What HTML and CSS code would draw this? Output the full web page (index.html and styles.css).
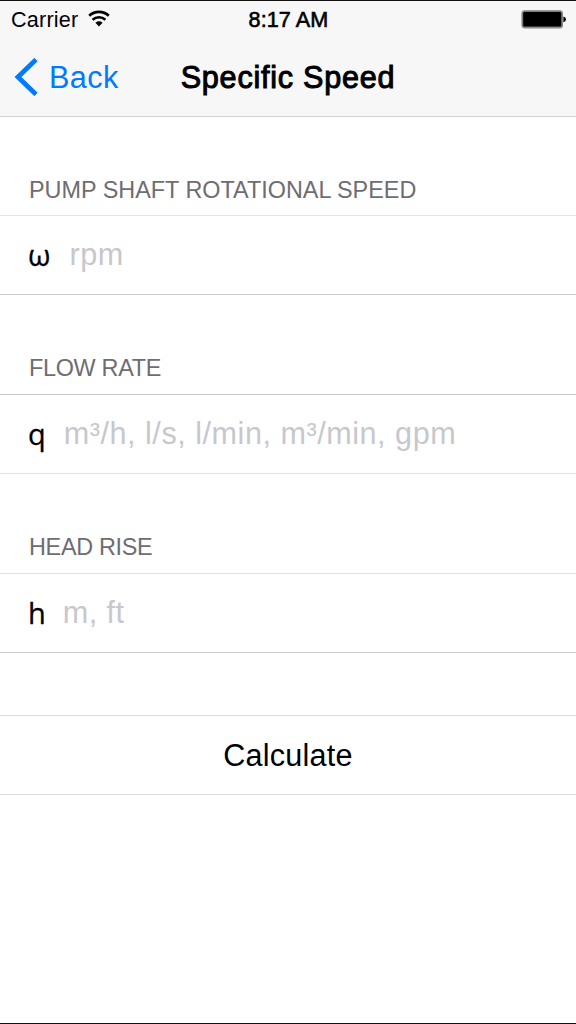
FILE: index.html
```html
<!DOCTYPE html>
<html lang="en">
<head>
    <meta charset="UTF-8">
    <meta name="viewport" content="width=device-width, initial-scale=1.0">
    <title>Specific Speed</title>
    <link rel="stylesheet" href="styles.css">
</head>
<body>
    <div class="screen">
        <header class="top-bar">
            <div class="status-bar">
                <div class="carrier">
                    <span class="carrier-name">Carrier</span>
                    <svg class="wifi" width="22" height="17" viewBox="0 0 22 17">
                        <path d="M1.2 5.7 A14.4 14.4 0 0 1 20.8 5.7" fill="none" stroke="#000" stroke-width="2.6"/>
                        <path d="M4.6 9.7 A9.6 9.6 0 0 1 17.4 9.7" fill="none" stroke="#000" stroke-width="2.6"/>
                        <path d="M7.4 12.8 Q11 9.9 14.6 12.8 L11 16.6 Z" fill="#000"/>
                    </svg>
                </div>
                <span class="time">8:17 AM</span>
                <svg class="battery" width="45" height="19" viewBox="0 0 45 19">
                    <rect x="1" y="0.8" width="40.4" height="17" rx="2.6" fill="#777" stroke="#888" stroke-width="1.2"/>
                    <rect x="2.2" y="2" width="38" height="14.6" rx="1.4" fill="#000"/>
                    <path d="M42.4 6.4 Q45 7 45 9.3 Q45 11.6 42.4 12.2 Z" fill="#000"/>
                </svg>
            </div>
            <nav class="nav-bar">
                <a class="back">
                    <svg class="chevron" width="24" height="38" viewBox="0 0 24 38">
                        <path d="M22 1.6 L4 19 L22 36.4" fill="none" stroke="#007aff" stroke-width="4.8"/>
                    </svg>
                    <span class="back-text">Back</span>
                </a>
                <h1 class="title">Specific Speed</h1>
            </nav>
        </header>

        <main>
            <section class="group">
                <h2 class="group-title">PUMP SHAFT ROTATIONAL SPEED</h2>
                <div class="row speed-row">
                    <span class="symbol">ω</span>
                    <span class="hint speed-hint">rpm</span>
                </div>
            </section>

            <section class="group">
                <h2 class="group-title flow-title">FLOW RATE</h2>
                <div class="row flow-row">
                    <span class="symbol">q</span>
                    <span class="hint flow-hint">m³/h, l/s, l/min, m³/min, gpm</span>
                </div>
            </section>

            <section class="group">
                <h2 class="group-title head-title">HEAD RISE</h2>
                <div class="row head-row">
                    <span class="symbol">h</span>
                    <span class="hint head-hint">m, ft</span>
                </div>
            </section>

            <div class="row calculate">
                <span>Calculate</span>
            </div>
        </main>
    </div>
</body>
</html>
```

FILE: styles.css
```css
body {
    margin: 0;
    background-color: #fff;
    color: #000;
    font-family: "Liberation Sans", Arial, sans-serif;
    font-size: 30.6px;
}

.screen {
    box-sizing: border-box;
    height: 1024px;
    border-top: 1px solid #111;
    border-bottom: 1px solid #111;
    overflow: hidden;
}

/* Status and navigation bars */
.top-bar {
    box-sizing: border-box;
    height: 116px;
    background-color: #f7f7f7;
    border-bottom: 1px solid #d3d3d3;
}

.status-bar {
    display: grid;
    grid-template-columns: 1fr auto 1fr;
    align-items: center;
    height: 37px;
    padding: 0 10px 0 11px;
    font-size: 21.6px;
}

.carrier {
    display: flex;
    align-items: center;
    gap: 10px;
}

.carrier-name {
    letter-spacing: 0.2px;
}

.wifi {
    margin-top: -2px;
}

.time {
    letter-spacing: 0.1px;
    -webkit-text-stroke: 0.6px #000;
}

.battery {
    justify-self: end;
}

.nav-bar {
    display: grid;
    grid-template-columns: 1fr auto 1fr;
    align-items: center;
    height: 77px;
    padding: 0 14px;
}

.back {
    display: flex;
    align-items: center;
    gap: 11px;
    color: #007aff;
    letter-spacing: 0.4px;
}

.back-text {
    padding-top: 2px;
}

.title {
    margin: 0;
    padding-top: 2px;
    font-size: 30.6px;
    font-weight: normal;
    letter-spacing: 0.75px;
    -webkit-text-stroke: 1px #000;
}

/* Input groups */
.group-title {
    box-sizing: border-box;
    height: 98px;
    margin: 0;
    padding: 60px 29px 0;
    color: #6d6d72;
    font-size: 23.4px;
    font-weight: normal;
    line-height: 27px;
    white-space: nowrap;
}

.flow-title,
.head-title {
    height: 99px;
    letter-spacing: -0.3px;
}

.row {
    box-sizing: border-box;
    display: flex;
    align-items: center;
    height: 80px;
    padding: 0 29px;
    border-top: 1px solid #dcdcde;
    border-bottom: 1px solid #dcdcde;
}

.speed-row {
    border-top-color: #e6e6e8;
    border-bottom-color: #c8c8cc;
}

.flow-row {
    border-top-color: #c8c8cc;
    border-bottom-color: #e2e2e4;
}

.head-row {
    border-top-color: #e2e2e4;
    border-bottom-color: #cdcdd0;
}

.symbol {
    margin-left: -1px;
    font-family: "Open Sans", "Noto Sans", sans-serif;
    font-size: 29px;
    line-height: 36px;
    -webkit-text-stroke: 0.3px #000;
}

.hint {
    margin: -2px 0 0 17px;
    color: #c7c7cd;
}

.speed-hint {
    margin-left: 19px;
    letter-spacing: 0.5px;
}

.flow-hint {
    margin-left: 18px;
    letter-spacing: 0.52px;
}

.head-hint {
    letter-spacing: 0.4px;
}

.calculate {
    justify-content: center;
    margin-top: 62px;
    letter-spacing: 0.2px;
}
```
